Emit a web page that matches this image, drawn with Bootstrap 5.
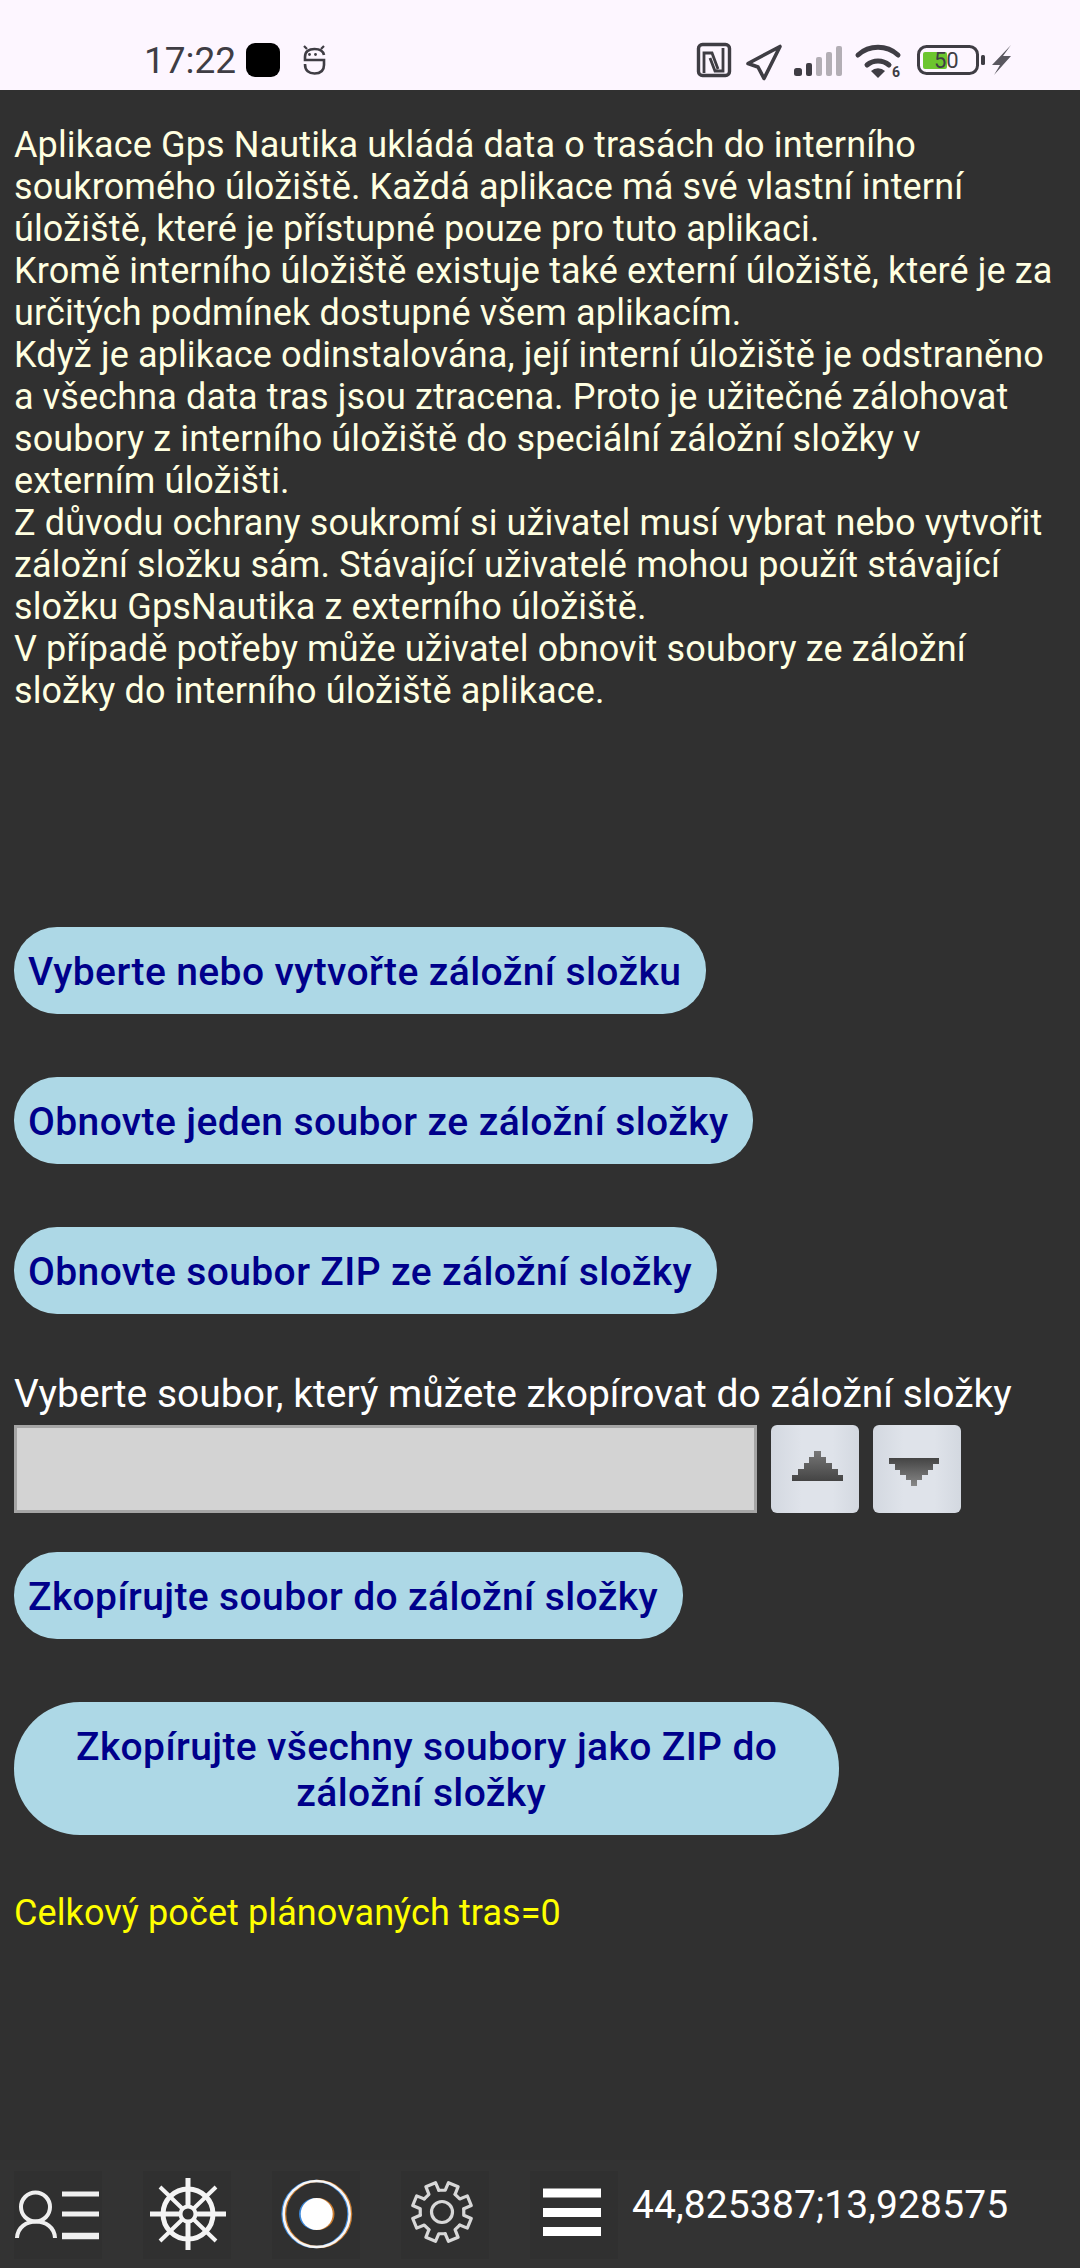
<!DOCTYPE html>
<html lang="cs">
<head>
  <meta charset="UTF-8" />
  <meta name="viewport" content="width=device-width, initial-scale=1.0"/>
  <title>Gps Nautika</title>
  <link href="https://cdn.jsdelivr.net/npm/bootstrap@5.3.0/dist/css/bootstrap.min.css" rel="stylesheet"/>
  <style>
    html, body { height: 100%; }
    body { background: #303030; font-family: Roboto, "Liberation Sans", sans-serif; }
    svg { display: block; }
    .app-screen { width: 1080px; height: 2268px; }
    .status-strip { height: 90px; background: #fdf6ff; padding: 38px 0 0 144px; color: #3f3d44; }
    .status-time { font-size: 37px; line-height: 46px; width: 102px; }
    .status-dot { width: 34px; height: 34px; background: #000; border-radius: 9px; margin-top: 5px; }
    .status-mask { margin: 8px 0 0 23px; overflow: visible; }
    .status-right { margin-left: auto; padding-right: 60px; }
    .content-area { padding: 34px 14px 0; }
    .intro-text { color: #ffffe0; font-size: 36px; line-height: 42px; height: 803px; margin: 0; letter-spacing: .13px; }
    .pill-btn { display: block; background: #add8e6; color: #00008b; border: 0; border-radius: 43px; font-size: 39px; font-weight: 500; line-height: 46px; letter-spacing: .38px; padding: 22px 25px 19px 14px; text-align: center; }
    .pill-btn:hover { background: #add8e6; color: #00008b; }
    .pill-gap { margin-bottom: 63px; }
    .pill-last { margin-bottom: 58px; }
    .pill-wide { padding: 22px 62px 19px; border-radius: 66px; }
    .pill-second { display: inline-block; margin-right: 11px; }
    .pick-label { color: #fff; font-size: 39px; line-height: 44px; margin: 0 0 9px; }
    .file-box { width: 743px; height: 88px; background: #d3d3d3; border: 3px solid #a5a5a5; }
    .arrow-btn { width: 88px; height: 88px; border: 0; padding: 0; border-radius: 6px; background: linear-gradient(90deg, #d3d8e0, #dfe3ea 35%, #dfe3ea 70%, #d3d8e0); }
    .pick-row { gap: 14px; margin-bottom: 39px; }
    .total-line { color: #ffff00; font-size: 36px; line-height: 44px; margin: 56px 0 0; letter-spacing: .1px; }
    .bottom-strip { height: 108px; background: #333333; padding: 1px 0 0 14px; gap: 41px; }
    .tool-slot { width: 88px; height: 88px; background: #303030; flex: none; }
    .coords-text { color: #fff; font-size: 39px; line-height: 44px; margin: 0 0 20px -27px; letter-spacing: .1px; }
  </style>
</head>
<body>
  <div class="app-screen d-flex flex-column overflow-hidden">
    <!-- status bar -->
    <div class="status-strip d-flex align-items-start flex-shrink-0">
      <span class="status-time">17:22</span>
      <span class="status-dot"></span>
      <svg class="status-mask" width="23" height="30" viewBox="0 0 23 30" fill="none" stroke="#3f3d44" stroke-width="2.600">
        <path d="M21 9C20 4 16 3 11.500 3 6 3 2 5 2 11V14H21V19C21 25 17 27.500 11.500 27.500 6 27.500 2 25 2 18"/>
        <circle cx="6.500" cy="8.500" r="1.400" fill="#3f3d44" stroke="none"/><circle cx="12.500" cy="8.500" r="1.400" fill="#3f3d44" stroke="none"/>
        <path d="M1 0l3 3M21 0l-3 3" stroke-width="2.200"/>
      </svg>
      <div class="status-right">
        <svg width="330" height="44" viewBox="0 0 330 44" fill="none">
          <rect x="8.500" y="6.500" width="31" height="31" rx="4" stroke="#3f3d44" stroke-width="3.400"/>
          <path d="M14 35V15H22L28 31M33 10V33H25L20 20" stroke="#3f3d44" stroke-width="2.800"/>
          <path d="M58 25.500L90 8.500 74 40.500 68 29Z" stroke="#3f3d44" stroke-width="3.600" stroke-linejoin="round"/>
          <g fill="#3f3d44"><rect x="104" y="30" width="8" height="8" rx="2.500"/><rect x="116" y="25" width="6" height="13" rx="2"/></g>
          <g fill="#b3aeb5"><rect x="126" y="19" width="6" height="19" rx="2"/><rect x="136" y="14" width="6" height="24" rx="2"/><rect x="146" y="8" width="6" height="30" rx="2"/></g>
          <path d="M168 17a30 30 0 0 1 40 0M177 27a17 17 0 0 1 22 0" stroke="#3f3d44" stroke-width="5" stroke-linecap="round"/>
          <path d="M181 33a10 10 0 0 1 14 0L188 40Z" fill="#3f3d44"/>
          <text x="202" y="39" font-family="Roboto" font-size="14" font-weight="700" fill="#3f3d44">6</text>
          <rect x="228.500" y="8.500" width="59" height="27" rx="8" stroke="#3f3d44" stroke-width="3"/>
          <rect x="233" y="14" width="24" height="17" rx="2" fill="#6cc52f"/>
          <text x="244" y="30" font-family="Roboto" font-size="22" fill="#3f3d44">50</text>
          <rect x="291" y="17" width="4" height="10" rx="1.500" fill="#3f3d44"/>
          <path d="M321 7L302 27h8l-6 10 17-19h-8l8-11Z" fill="#5a5860"/>
        </svg>
      </div>
    </div>

    <div class="content-area flex-grow-1">
      <p class="intro-text">Aplikace Gps Nautika ukládá data o trasách do interního<br>soukromého úložiště. Každá aplikace má své vlastní interní<br>úložiště, které je přístupné pouze pro tuto aplikaci.<br>Kromě interního úložiště existuje také externí úložiště, které je za<br>určitých podmínek dostupné všem aplikacím.<br>Když je aplikace odinstalována, její interní úložiště je odstraněno<br>a všechna data tras jsou ztracena. Proto je užitečné zálohovat<br>soubory z interního úložiště do speciální záložní složky v<br>externím úložišti.<br>Z důvodu ochrany soukromí si uživatel musí vybrat nebo vytvořit<br>záložní složku sám. Stávající uživatelé mohou použít stávající<br>složku GpsNautika z externího úložiště.<br>V případě potřeby může uživatel obnovit soubory ze záložní<br>složky do interního úložiště aplikace.</p>

      <div class="d-flex flex-column align-items-start">
        <button class="pill-btn pill-gap btn">Vyberte nebo vytvořte záložní složku</button>
        <button class="pill-btn pill-gap btn">Obnovte jeden soubor ze záložní složky</button>
        <button class="pill-btn pill-last btn">Obnovte soubor ZIP ze záložní složky</button>
        <p class="pick-label">Vyberte soubor, který můžete zkopírovat do záložní složky</p>
        <div class="pick-row d-flex">
          <div class="file-box"></div>
          <button class="arrow-btn"><svg width="88" height="88" viewBox="0 0 88 88"><defs><linearGradient id="upG" x1="0" y1="0" x2="0" y2="1"><stop offset="0" stop-color="#777"/><stop offset="1" stop-color="#444"/></linearGradient></defs><path d="M43 26H50V32H55V38H61V44H67V50H72V56H21V50H27V44H33V38H38V32H43Z" fill="url(#upG)"/></svg></button>
          <button class="arrow-btn"><svg width="88" height="88" viewBox="0 0 88 88"><defs><linearGradient id="downG" x1="0" y1="0" x2="0" y2="1"><stop offset="0" stop-color="#444"/><stop offset="1" stop-color="#888"/></linearGradient></defs><path d="M16 33H66V39H60V45H55V50H49V55H44V61H38V55H33V50H27V45H22V39H16Z" fill="url(#downG)"/></svg></button>
        </div>
        <button class="pill-btn pill-gap btn">Zkopírujte soubor do záložní složky</button>
        <button class="pill-btn pill-wide btn">Zkopírujte všechny soubory jako ZIP do<br><span class="pill-second">záložní složky</span></button>
      </div>

      <p class="total-line">Celkový počet plánovaných tras=0</p>
    </div>

    <!-- bottom toolbar -->
    <div class="bottom-strip d-flex align-items-center flex-shrink-0">
      <div class="tool-slot"><svg width="88" height="88" viewBox="0 0 88 88" fill="none" stroke="#efefef">
        <circle cx="21.500" cy="36" r="14.500" stroke-width="4"/>
        <path d="M3 67c1-22 37-22 38 0" stroke-width="4"/>
        <path d="M48 23H85M48 43H85" stroke-width="5"/>
        <path d="M48 65H85" stroke-width="6.500"/>
      </svg></div>
      <div class="tool-slot"><svg width="88" height="88" viewBox="0 0 88 88" fill="none" stroke="#f4f4f4">
        <path d="M45 7V79M7 43H83" stroke-width="5"/>
        <path d="M17 16L73 70M73 16L17 70" stroke-width="4"/>
        <circle cx="45" cy="43" r="25" stroke-width="5"/>
        <circle cx="45" cy="43" r="7.500" fill="#303030" stroke-width="4"/>
      </svg></div>
      <div class="tool-slot"><svg width="88" height="88" viewBox="0 0 88 88" fill="none" stroke-width="2.500">
        <ellipse cx="43.500" cy="43" rx="33" ry="33" stroke="#3a86d8"/>
        <ellipse cx="46" cy="43" rx="33" ry="33" stroke="#c97a2c"/>
        <ellipse cx="44.700" cy="43" rx="33" ry="33" stroke="#f6f6f6"/>
        <ellipse cx="43.500" cy="43" rx="16.500" ry="16" fill="#3a86d8" stroke="none"/>
        <ellipse cx="46" cy="43" rx="16.500" ry="16" fill="#c97a2c" stroke="none"/>
        <ellipse cx="44.700" cy="43" rx="16" ry="16" fill="#fff" stroke="none"/>
      </svg></div>
      <div class="tool-slot"><svg width="88" height="88" viewBox="0 0 88 88" fill="none" stroke="#d8d8d8" stroke-width="3.200" stroke-linejoin="round" stroke-linecap="round">
        <defs><path id="gearTooth" d="M37.740 19.240L44.260 19.240 47.490 11.710 57.120 15.700 54.090 23.310"/></defs>
        <use href="#gearTooth"/><use href="#gearTooth" transform="rotate(45 41 41)"/><use href="#gearTooth" transform="rotate(90 41 41)"/><use href="#gearTooth" transform="rotate(135 41 41)"/>
        <use href="#gearTooth" transform="rotate(180 41 41)"/><use href="#gearTooth" transform="rotate(225 41 41)"/><use href="#gearTooth" transform="rotate(270 41 41)"/><use href="#gearTooth" transform="rotate(315 41 41)"/>
        <circle cx="41" cy="41" r="10.500"/>
      </svg></div>
      <div class="tool-slot"><svg width="88" height="88" viewBox="0 0 88 88" stroke="#fff" stroke-width="9">
        <path d="M13 22H71M13 41.500H71M13 60.500H71"/>
      </svg></div>
      <div class="coords-text">44,825387;13,928575</div>
    </div>
  </div>

  <script src="https://cdn.jsdelivr.net/npm/bootstrap@5.3.0/dist/js/bootstrap.bundle.min.js"></script>
</body>
</html>
